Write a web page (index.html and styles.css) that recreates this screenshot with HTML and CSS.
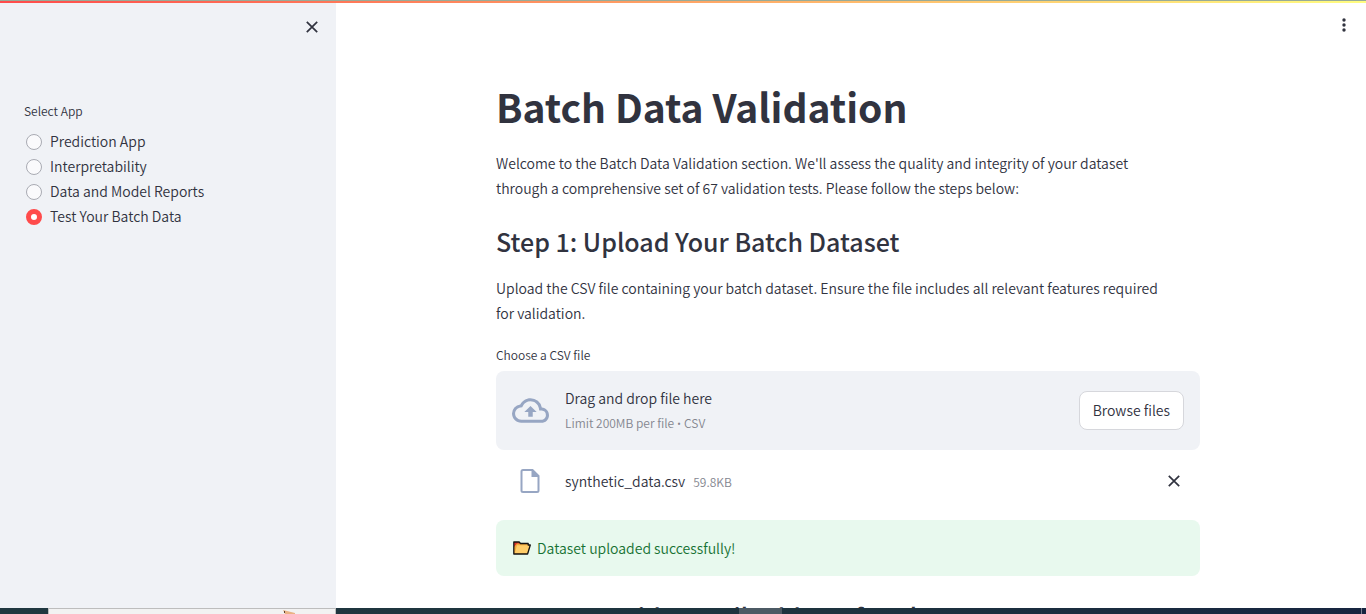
FILE: index.html
```
<!DOCTYPE html>
<html lang="en">
<head>
<meta charset="utf-8">
<meta name="viewport" content="width=device-width, initial-scale=1">
<title>Batch Data Validation</title>
<link rel="stylesheet" href="styles.css">
</head>
<body>
<div class="decoration"></div>
<div class="app">
  <aside class="sidebar">
    <button class="icon-button sidebar-close" type="button" aria-label="Close sidebar">
      <svg class="cross" viewBox="0 0 12 12"><path d="M.8.8 11.2 11.2M11.2.8.8 11.2"/></svg>
    </button>
    <fieldset class="radio-group">
      <legend class="small-label">Select App</legend>
      <label class="radio"><input type="radio" name="app">Prediction App</label>
      <label class="radio"><input type="radio" name="app">Interpretability</label>
      <label class="radio"><input type="radio" name="app">Data and Model Reports</label>
      <label class="radio"><input type="radio" name="app" checked>Test Your Batch Data</label>
    </fieldset>
  </aside>
  <main class="main">
    <button class="icon-button menu-button" type="button" aria-label="Main menu">
      <svg class="dots" viewBox="0 0 4 14"><circle cx="2" cy="2" r="1.700"/><circle cx="2" cy="7" r="1.700"/><circle cx="2" cy="12" r="1.700"/></svg>
    </button>
    <div class="content">
      <h1 class="title">Batch Data Validation</h1>
      <p class="text">Welcome to the Batch Data Validation section. We'll assess the quality and integrity of your dataset through a comprehensive set of 67 validation tests. Please follow the steps below:</p>
      <h2 class="step">Step 1: Upload Your Batch Dataset</h2>
      <p class="text">Upload the CSV file containing your batch dataset. Ensure the file includes all relevant features required for validation.</p>
      <p class="small-label upload-label" id="upload-label">Choose a CSV file</p>
      <section class="dropzone" aria-labelledby="upload-label">
        <svg class="cloud" viewBox="0 0 24 24"><path d="M19.35 10.04A7.49 7.49 0 0 0 12 4C9.11 4 6.6 5.64 5.35 8.04A5.994 5.994 0 0 0 0 14c0 3.31 2.69 6 6 6h13c2.76 0 5-2.24 5-5 0-2.64-2.05-4.78-4.65-4.96zM19 18H6c-2.21 0-4-1.79-4-4 0-2.05 1.53-3.76 3.56-3.97l1.07-.11.5-.95A5.469 5.469 0 0 1 12 6c2.62 0 4.88 1.86 5.39 4.43l.3 1.5 1.53.11A2.98 2.98 0 0 1 22 15c0 1.65-1.35 3-3 3zM8 13h2.550v3h2.900v-3H16l-4-4z"/></svg>
        <div class="drop-text">
          <span class="drop-title">Drag and drop file here</span>
          <span class="hint">Limit 200MB per file <span class="bullet">•</span> CSV</span>
        </div>
        <button class="browse" type="button">Browse files</button>
      </section>
      <div class="file">
        <svg class="file-icon" viewBox="0 0 20 26"><path d="M3 2h9.500l6 6v14.500a1.500 1.500 0 0 1-1.500 1.500h-14a1.500 1.500 0 0 1-1.500-1.500v-19a1.500 1.500 0 0 1 1.500-1.500z" fill="none" stroke="currentColor" stroke-width="2"/><path d="M11.500 1.500v7.500h7.500z"/></svg>
        <span class="file-name">synthetic_data.csv</span>
        <span class="hint">59.8KB</span>
        <button class="icon-button file-delete" type="button" aria-label="Remove file">
          <svg class="cross" viewBox="0 0 12 12"><path d="M.8.8 11.2 11.2M11.2.8.8 11.2"/></svg>
        </button>
      </div>
      <div class="alert" role="alert">
        <svg class="folder" viewBox="0 0 18 14"><path d="M1 12.800V1h5l1.500 1.500H15V4h2.300l-2.500 9H1z" fill="#f2a83b"/><path d="M1 1h5l1 1.500H4L1 6z" fill="#dc352c"/><path d="M4 4.300h12.700l-2.400 8H1.800z" fill="#ffcd69"/><path d="M.8 13V1h5.400l1.300 1.500h7.700V4h2.100l-2.700 9z" fill="none" stroke="#151515" stroke-width="1.300" stroke-linejoin="round"/></svg>
        <span>Dataset uploaded successfully!</span>
      </div>
      <h2 class="step next-step">Step 2: Provide Email Address for Alerts</h2>
    </div>
  </main>
</div>
<div class="taskbar">
  <div class="task-search">
    <svg class="search-art" viewBox="0 0 12 4"><path d="M0 0 12 3v1H2z" fill="#e9b284"/><path d="M1 1h1v2H1z" fill="#594131"/></svg>
  </div>
  <div class="task-active"></div>
  <div class="task-desktop"></div>
</div>
</body>
</html>
```
FILE: styles.css
```
* { box-sizing: border-box; }

body {
  margin: 0;
  height: 100vh;
  display: flex;
  flex-direction: column;
  overflow: hidden;
  background: #fff;
  color: #31333f;
  font-family: "Noto Sans CJK SC", "Noto Sans", sans-serif;
  font-size: 14px;
  font-weight: 350;
  line-height: 25px;
}

h1, h2, p, fieldset { margin: 0; }
button { font: inherit; color: inherit; cursor: pointer; }
svg { display: block; flex: none; fill: currentColor; }

.decoration {
  flex: none;
  height: 3px;
  border-top: 1px solid #98ab98;
  background: linear-gradient(90deg, #ff4b4b, #fffd80);
}

.app { flex: 1; min-height: 0; display: flex; }

.sidebar {
  flex: none;
  width: 336px;
  padding: 12px 12px 0 24px;
  background: #f0f2f6;
  display: flex;
  flex-direction: column;
}

.icon-button {
  display: flex;
  align-items: center;
  justify-content: center;
  width: 24px;
  height: 24px;
  padding: 0;
  border: 0;
  background: none;
}
.sidebar-close { align-self: flex-end; }
.cross { width: 12px; height: 12px; stroke: currentColor; stroke-width: 1.7; }

.small-label { font-size: 12px; line-height: 20px; }

.radio-group {
  margin-top: 62px;
  padding: 0;
  border: 0;
}
.radio-group legend { padding: 0; margin-bottom: 8px; }
.radio { display: flex; align-items: center; gap: 8px; padding-left: 2px; }
.radio input {
  appearance: none;
  width: 16px;
  height: 16px;
  margin: 0;
  border: 1px solid #a9abb3;
  border-radius: 50%;
  background: #fafafc;
}
.radio input:checked { border: 5px solid #ff4b4b; background: #fff; }

.main {
  flex: 1;
  min-width: 0;
  position: relative;
  overflow: hidden;
  padding-right: 6px;
}
.menu-button { position: absolute; top: 10px; right: 10px; }
.dots { width: 4px; height: 14px; }

.content {
  max-width: 736px;
  margin: 0 auto;
  padding: 77px 16px 0;
}
.title { font-size: 39px; font-weight: 700; line-height: 52px; }
.text { margin-top: 19px; padding-right: 32px; }
.step {
  margin-top: 23px;
  font-size: 25px;
  font-weight: 500;
  line-height: 34px;
}
.step + .text { margin-top: 18px; }
.upload-label { margin-top: 19px; }

.dropzone {
  display: flex;
  align-items: center;
  margin-top: 6px;
  padding: 16px;
  border-radius: 8px;
  background: #f0f2f6;
}
.cloud { width: 37px; height: 37px; margin-right: 16px; color: #97a6c3; }
.drop-text { flex: 1; display: flex; flex-direction: column; gap: 4px; line-height: 22px; }
.hint { font-size: 12px; color: #84868f; }
.drop-text .hint { line-height: 20px; }
.bullet { font-family: "Noto Sans", sans-serif; }
.browse {
  height: 39px;
  padding: 0 13px;
  border: 1px solid #d6d7dc;
  border-radius: 8px;
  background: #fff;
}

.file {
  display: flex;
  align-items: center;
  gap: 8px;
  height: 62px;
  padding: 0 14px 0 24px;
}
.file-icon { width: 20px; height: 26px; margin-right: 17px; color: #97a6c3; }
.file-delete { margin-left: auto; }

.alert {
  display: flex;
  align-items: center;
  gap: 6px;
  height: 56px;
  margin-top: 8px;
  padding: 0 17px;
  border-radius: 8px;
  background: #e8f9ee;
  color: #177233;
}
.folder { width: 18px; height: 14px; }
.next-step { margin-top: 23px; white-space: nowrap; }

.taskbar {
  flex: none;
  display: flex;
  height: 6px;
  padding-left: 48px;
  background: linear-gradient(90deg, #203840, #1d333e 60%, #172540);
}
.task-search {
  width: 288px;
  padding: 1px 0 0 234px;
  border: 1px solid #bdbdbd;
  border-bottom: 0;
  background: #f2f2f2;
}
.search-art { width: 12px; height: 4px; }
.task-active { width: 43px; margin-left: 403px; background: #4c5a64; }
.task-desktop { width: 1px; margin: 0 4px 0 auto; background: #7b8292; }
```
